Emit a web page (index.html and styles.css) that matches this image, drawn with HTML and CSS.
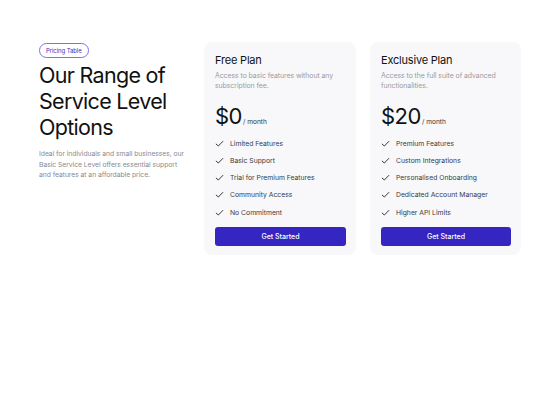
FILE: index.html
```html
<!DOCTYPE html>
<html>
<head>
<meta charset="utf-8">
<link rel="stylesheet" href="styles.css">
</head>
<body>
<main class="pricing">
  <section class="intro">
    <span class="badge">Pricing Table</span>
    <h1 class="title">Our Range of Service Level Options</h1>
    <p class="lead">Ideal for individuals and small businesses, our Basic Service Level offers essential support and features at an affordable price.</p>
  </section>
  <article class="card">
    <h2 class="plan">Free Plan</h2>
    <p class="desc">Access to basic features without any subscription fee.</p>
    <div class="price"><span class="amount">$0</span><span class="per">/ month</span></div>
    <ul class="features">
      <li><svg class="check" viewBox="0 0 10 10"><path d="M1 5.4 L3.7 7.8 L9 2.4"/></svg>Limited Features</li>
      <li><svg class="check" viewBox="0 0 10 10"><path d="M1 5.4 L3.7 7.8 L9 2.4"/></svg>Basic Support</li>
      <li><svg class="check" viewBox="0 0 10 10"><path d="M1 5.4 L3.7 7.8 L9 2.4"/></svg>Trial for Premium Features</li>
      <li><svg class="check" viewBox="0 0 10 10"><path d="M1 5.4 L3.7 7.8 L9 2.4"/></svg>Community Access</li>
      <li><svg class="check" viewBox="0 0 10 10"><path d="M1 5.4 L3.7 7.8 L9 2.4"/></svg>No Commitment</li>
    </ul>
    <button class="cta">Get Started</button>
  </article>
  <article class="card">
    <h2 class="plan">Exclusive Plan</h2>
    <p class="desc">Access to the full suite of advanced functionalities.</p>
    <div class="price"><span class="amount">$20</span><span class="per">/ month</span></div>
    <ul class="features">
      <li><svg class="check" viewBox="0 0 10 10"><path d="M1 5.4 L3.7 7.8 L9 2.4"/></svg>Premium Features</li>
      <li><svg class="check" viewBox="0 0 10 10"><path d="M1 5.4 L3.7 7.8 L9 2.4"/></svg>Custom Integrations</li>
      <li><svg class="check" viewBox="0 0 10 10"><path d="M1 5.4 L3.7 7.8 L9 2.4"/></svg>Personalised Onboarding</li>
      <li><svg class="check" viewBox="0 0 10 10"><path d="M1 5.4 L3.7 7.8 L9 2.4"/></svg>Dedicated Account Manager</li>
      <li><svg class="check" viewBox="0 0 10 10"><path d="M1 5.4 L3.7 7.8 L9 2.4"/></svg>Higher API Limits</li>
    </ul>
    <button class="cta">Get Started</button>
  </article>
</main>
</body>
</html>
```
FILE: styles.css
```css
* { box-sizing: border-box; }
html, body { margin: 0; background: #ffffff; }
body {
  font-family: Inter, "Noto Sans", "Liberation Sans", sans-serif;
  color: #141414;
}
.pricing {
  display: grid;
  grid-template-columns: 151px 152px 151px;
  column-gap: 14px;
  align-items: start;
  padding: 42px 0 0 39px;
}
.intro {
  display: flex;
  flex-direction: column;
  align-items: flex-start;
  padding-top: 1px;
}
.badge {
  display: block;
  font-size: 6px;
  line-height: 13px;
  padding: 0 6px;
  border: 1px solid #7d70ee;
  border-radius: 8px;
  color: #3b2fb8;
  letter-spacing: -0.1px;
}
.title {
  margin: 4px 0 0 0;
  font-size: 21.5px;
  line-height: 26px;
  font-weight: 400;
  letter-spacing: -0.7px;
  color: #111;
}
.lead {
  margin: 9px 0 0 0;
  padding-right: 4px;
  font-size: 6.8px;
  line-height: 10.6px;
  color: #8a8a8f;
  letter-spacing: -0.05px;
}
.card {
  background: #f8f8fa;
  border-radius: 8px;
  padding: 11px 10px 9px 11px;
}
.plan {
  margin: 0;
  font-size: 11px;
  line-height: 14px;
  font-weight: 400;
  letter-spacing: -0.2px;
  color: #111;
}
.desc {
  margin: 4px 0 0 0;
  font-size: 6.9px;
  line-height: 10.4px;
  color: #9a9aa0;
  letter-spacing: -0.05px;
  padding-right: 8px;
}
.price {
  margin-top: 11px;
  display: flex;
  align-items: baseline;
}
.amount {
  font-size: 22px;
  line-height: 26px;
  letter-spacing: -0.5px;
  color: #111;
}
.per {
  font-size: 6.6px;
  color: #333;
  margin-left: 1px;
}
.features {
  list-style: none;
  margin: 9px 0 0 0;
  padding: 0;
  display: flex;
  flex-direction: column;
  gap: 6.2px;
}
.features li {
  display: flex;
  align-items: center;
  gap: 6px;
  font-size: 6.8px;
  line-height: 11px;
  font-weight: 400;
  color: #3a3a3f;
}
.check {
  width: 9px;
  height: 9px;
  fill: none;
  stroke: #222;
  stroke-width: 1;
  flex: none;
}
.cta {
  display: block;
  width: 100%;
  margin-top: 9px;
  height: 19px;
  border: 0;
  border-radius: 3px;
  background: #3526c2;
  color: #fff;
  font-family: inherit;
  font-size: 7px;
  font-weight: 500;
}
```
